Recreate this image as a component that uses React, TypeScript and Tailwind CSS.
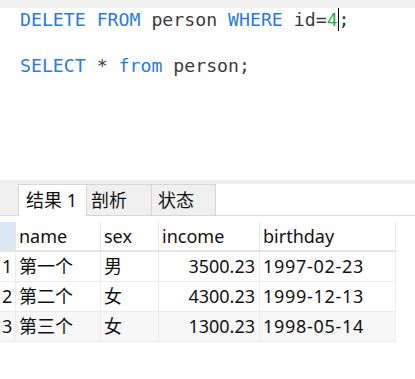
import React from "react";

interface PersonRow {
    id: number;
    name: string;
    sex: string;
    income: string;
    birthday: string;
}

const rows: PersonRow[] = [
    { id: 1, name: "第一个", sex: "男", income: "3500.23", birthday: "1997-02-23" },
    { id: 2, name: "第二个", sex: "女", income: "4300.23", birthday: "1999-12-13" },
    { id: 3, name: "第三个", sex: "女", income: "1300.23", birthday: "1998-05-14" },
];

const kw = "text-[#2a7be4]";
const ident = "text-[#3a3a3a]";

export default function App() {
    return (
        <div className="w-[415px] h-[379px] bg-white overflow-hidden flex flex-col">
            {/* top bar */}
            <div className="h-[8px] bg-[#f0f0f0] shrink-0" />

            {/* SQL editor */}
            <div
                className="h-[172px] shrink-0 pl-[20px] text-[18.2px] leading-[23px] whitespace-pre"
                style={{ fontFamily: '"DejaVu Sans Mono", monospace' }}
            >
                <div>
                    <span className={kw}>DELETE FROM</span>
                    <span className={ident}> person </span>
                    <span className={kw}>WHERE</span>
                    <span className={ident}> id=</span>
                    <span className="text-[#21b04b]">4</span>
                    <span className="inline-block w-px h-[23px] bg-black align-top" />
                    <span className={ident}>;</span>
                </div>
                <div>&nbsp;</div>
                <div>
                    <span className={kw}>SELECT</span>
                    <span className={ident}> * </span>
                    <span className={kw}>from</span>
                    <span className={ident}> person;</span>
                </div>
            </div>

            <div className="h-[4px] bg-[#f0f0f0] shrink-0" />

            {/* result tabs */}
            <div
                className="h-[32px] shrink-0 flex text-[18px] text-[#111]"
                style={{ fontFamily: '"Noto Sans", "Noto Sans CJK SC", sans-serif' }}
            >
                <div className="w-[18px] bg-[#f0f0f0] border-b border-[#dcdcdc]" />
                <div className="w-[69px] bg-white border-x border-t border-[#d6d6d6] pl-[7px] flex items-center">
                    结果 1
                </div>
                <div className="w-[65px] bg-[#f0f0f0] border-r border-b border-t border-[#d6d6d6] pl-[4px] flex items-center">
                    剖析
                </div>
                <div className="w-[64px] bg-[#f0f0f0] border-r border-b border-t border-[#d6d6d6] pl-[6px] flex items-center">
                    状态
                </div>
                <div className="flex-1 border-b border-[#dcdcdc]" />
            </div>

            {/* result grid */}
            <div
                className="pt-[6px] text-[18px] text-[#111]"
                style={{ fontFamily: '"Noto Sans", "Noto Sans CJK SC", sans-serif' }}
            >
                <div className="w-[396px] grid grid-cols-[16px_85px_58px_101px_136px]">
                    <div className="h-[30px] bg-[#dae8f6] border-r border-b-2 border-[#e6e6e6]" />
                    <div className="h-[30px] pl-[3px] flex items-center border-r border-b-2 border-[#e6e6e6]">name</div>
                    <div className="h-[30px] pl-[3px] flex items-center border-r border-b-2 border-[#e6e6e6]">sex</div>
                    <div className="h-[30px] pl-[3px] flex items-center border-r border-b-2 border-[#e6e6e6]">income</div>
                    <div className="h-[30px] pl-[3px] flex items-center border-r border-b-2 border-[#e6e6e6]">birthday</div>

                    {rows.map((row) => {
                        const bg = row.id === 3 ? "bg-[#f7f7f7]" : "bg-white";
                        return (
                            <React.Fragment key={row.id}>
                                <div className={`h-[30px] ${bg} pl-[2px] flex items-center border-r border-b border-[#ececec]`}>
                                    {row.id}
                                </div>
                                <div className={`h-[30px] ${bg} pl-[3px] flex items-center border-r border-b border-[#ececec]`}>
                                    {row.name}
                                </div>
                                <div className={`h-[30px] ${bg} pl-[3px] flex items-center border-r border-b border-[#ececec]`}>
                                    {row.sex}
                                </div>
                                <div className={`h-[30px] ${bg} pr-[4px] flex items-center justify-end border-r border-b border-[#ececec]`}>
                                    {row.income}
                                </div>
                                <div className={`h-[30px] ${bg} pl-[3px] flex items-center tracking-[0.7px] border-r border-b border-[#ececec]`}>
                                    {row.birthday}
                                </div>
                            </React.Fragment>
                        );
                    })}
                </div>
            </div>
        </div>
    );
}
